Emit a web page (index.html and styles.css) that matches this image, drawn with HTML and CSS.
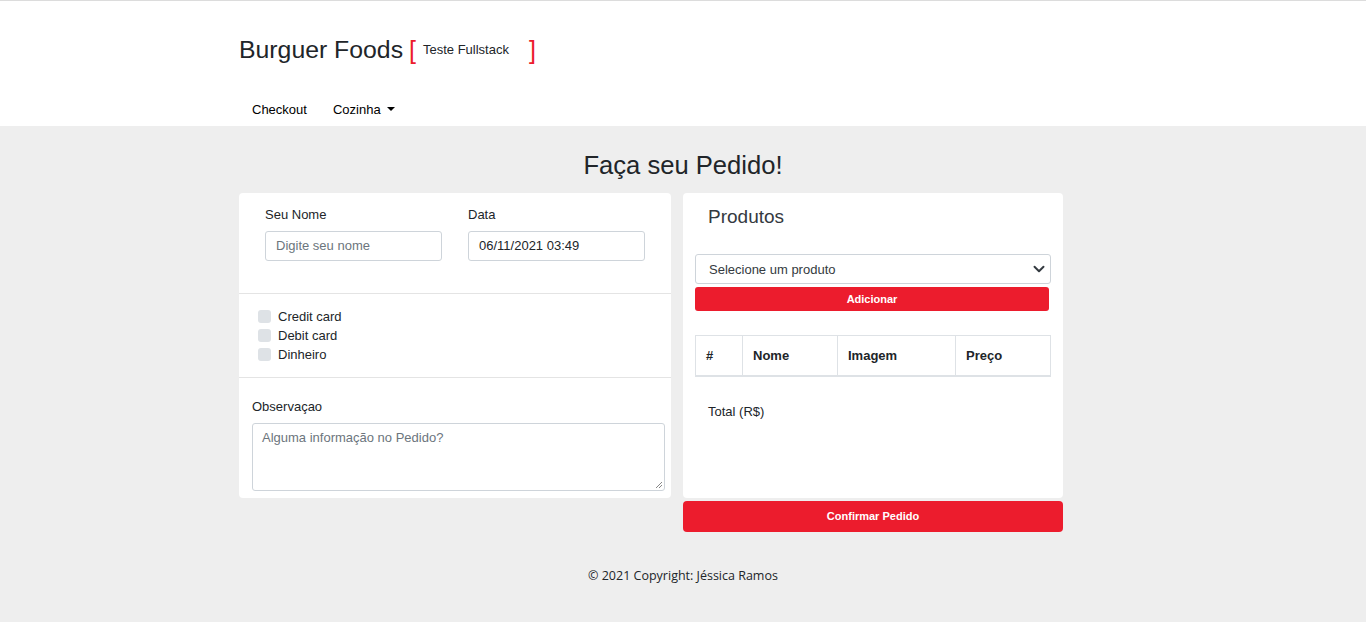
FILE: index.html
```html
<!DOCTYPE html>
<html lang="pt-BR">
<head>
<meta charset="utf-8">
<title>Burguer Foods</title>
<link rel="stylesheet" href="styles.css">
</head>
<body>
<header class="topbar">
  <div class="container">
    <div class="brand-row">
      <span class="brand">Burguer Foods</span>
      <span class="bracket">[</span>
      <span class="subtitle">Teste Fullstack</span>
      <span class="bracket bracket-close">]</span>
    </div>
    <nav class="nav">
      <a class="nav-link">Checkout</a>
      <a class="nav-link dropdown">Cozinha <span class="caret"></span></a>
    </nav>
  </div>
</header>
<main class="main">
  <h1 class="page-title">Faça seu Pedido!</h1>
  <div class="container cols">
    <section class="card card-left">
      <div class="sec sec-fields">
        <div class="field">
          <label class="lbl">Seu Nome</label>
          <div class="input placeholder">Digite seu nome</div>
        </div>
        <div class="field">
          <label class="lbl">Data</label>
          <div class="input">06/11/2021 03:49</div>
        </div>
      </div>
      <div class="sec sec-checks">
        <div class="check"><span class="box"></span>Credit card</div>
        <div class="check"><span class="box"></span>Debit card</div>
        <div class="check"><span class="box"></span>Dinheiro</div>
      </div>
      <div class="sec sec-obs">
        <label class="lbl">Observaçao</label>
        <div class="textarea">Alguma informação no Pedido?
          <svg class="grip" width="8" height="8" viewBox="0 0 8 8"><path d="M7 1L1 7M7 4L4 7" stroke="#888" stroke-width="1"/></svg>
        </div>
      </div>
    </section>
    <div class="right-col">
      <section class="card card-right">
        <h2 class="prod-title">Produtos</h2>
        <div class="select">Selecione um produto
          <svg class="chev" width="12" height="12" viewBox="0 0 16 16"><path d="M2 5l6 6 6-6" fill="none" stroke="#343a40" stroke-width="2.6" stroke-linecap="round" stroke-linejoin="round"/></svg>
        </div>
        <button class="btn btn-add">Adicionar</button>
        <table class="tbl">
          <thead>
            <tr><th class="c1">#</th><th class="c2">Nome</th><th class="c3">Imagem</th><th class="c4">Preço</th></tr>
          </thead>
        </table>
        <div class="total">Total (R$)</div>
      </section>
      <button class="btn btn-confirm">Confirmar Pedido</button>
    </div>
  </div>
  <footer class="footer">© 2021 Copyright: Jéssica Ramos</footer>
</main>
</body>
</html>
```
FILE: styles.css
```css
* { box-sizing: border-box; }
html, body { margin: 0; padding: 0; }
body {
  font-family: "Liberation Sans", Arial, sans-serif;
  color: #212529;
  background: #eeeeee;
  height: 622px;
  overflow: hidden;
}
.container { width: 888px; margin: 0 auto; }
.topbar {
  background: #fff;
  border-top: 1px solid #dcdcdc;
  height: 126px;
}
.brand-row {
  display: flex;
  align-items: center;
  padding-top: 33px;
  height: 64px;
}
.brand { font-size: 24.8px; line-height: 30px; color: #212529; }
.bracket { color: #ec1c2d; font-size: 25px; line-height: 30px; margin-left: 6px; }
.subtitle { font-size: 13px; margin-left: 7px; color: #212529; }
.bracket-close { margin-left: 20px; }
.nav { display: flex; padding-top: 36px; padding-left: 13px; }
.nav-link { font-size: 13px; color: #000; margin-right: 26px; line-height: 18px; }
.caret {
  display: inline-block;
  width: 0; height: 0;
  border-left: 4px solid transparent;
  border-right: 4px solid transparent;
  border-top: 4px solid #000;
  vertical-align: 3px;
  margin-left: 3px;
}
.main { padding-top: 24px; }
.page-title {
  margin: 0 0 12px 0;
  text-align: center;
  font-weight: normal;
  font-size: 25.6px;
  line-height: 31px;
  color: #212529;
}
.cols { display: flex; gap: 12px; align-items: flex-start; }
.card { background: #fff; border-radius: 4px; }
.card-left { width: 432px; height: 305px; display: flex; flex-direction: column; }
.sec { border-bottom: 1px solid #e4e4e4; }
.sec:last-child { border-bottom: none; }
.sec-fields { display: flex; gap: 26px; padding: 14px 26px 0 26px; height: 101px; }
.field { width: 177px; display: flex; flex-direction: column; }
.lbl { font-size: 13px; line-height: 15px; display: block; }
.input {
  margin-top: 9px;
  height: 30px;
  border: 1px solid #ced4da;
  border-radius: 3px;
  font-size: 13px;
  line-height: 28px;
  padding-left: 10px;
  color: #212529;
}
.input.placeholder { color: #6c757d; }
.sec-checks { padding: 13px 19px 0 19px; height: 84px; }
.check { display: flex; align-items: center; font-size: 13px; height: 19px; line-height: 19px; }
.box { width: 13px; height: 13px; background: #dee2e6; border-radius: 3px; margin-right: 7px; }
.sec-obs { padding: 21px 6px 0 13px; }
.sec-obs .lbl { line-height: 15px; }
.textarea {
  position: relative;
  margin-top: 9px;
  height: 68px;
  border: 1px solid #ced4da;
  border-radius: 3px;
  font-size: 13px;
  color: #6c757d;
  padding: 6px 9px;
  line-height: 16px;
}
.grip { position: absolute; right: 1px; bottom: 1px; }
.right-col { width: 380px; display: flex; flex-direction: column; gap: 3px; }
.card-right { height: 305px; padding: 12px 12px 0 12px; }
.prod-title { margin: 0 0 0 13px; font-weight: normal; font-size: 19px; line-height: 23px; color: #343a40; }
.select {
  position: relative;
  margin-top: 26px;
  height: 30px;
  border: 1px solid #ced4da;
  border-radius: 3px;
  font-size: 13px;
  line-height: 29px;
  padding-left: 13px;
  color: #343a40;
}
.chev { position: absolute; right: 5px; top: 8px; }
.btn {
  display: block;
  border: none;
  background: #ec1c2d;
  color: #fff;
  font-family: "Liberation Sans", Arial, sans-serif;
  font-weight: bold;
  font-size: 11px;
  border-radius: 3px;
  cursor: pointer;
}
.btn-add { width: 354px; height: 24px; margin-top: 3px; }
.tbl {
  margin-top: 24px;
  width: 356px;
  border-collapse: collapse;
  border: 1px solid #dee2e6;
}
.tbl th {
  text-align: left;
  font-size: 13px;
  font-weight: bold;
  height: 40px;
  padding: 0 0 0 10px;
  border-left: 1px solid #dee2e6;
  border-bottom: 2px solid #dee2e6;
  color: #212529;
}
.tbl th.c1 { width: 47px; }
.tbl th.c2 { width: 95px; }
.tbl th.c3 { width: 118px; }
.total { font-size: 13px; margin: 27px 0 0 13px; line-height: 15px; }
.btn-confirm { width: 380px; height: 31px; border-radius: 4px; padding-bottom: 2px; }
.footer {
  text-align: center;
  margin-top: 35px;
  font-family: "Open Sans", "Liberation Sans", sans-serif;
  font-size: 12.5px;
  color: #212529;
}
```
